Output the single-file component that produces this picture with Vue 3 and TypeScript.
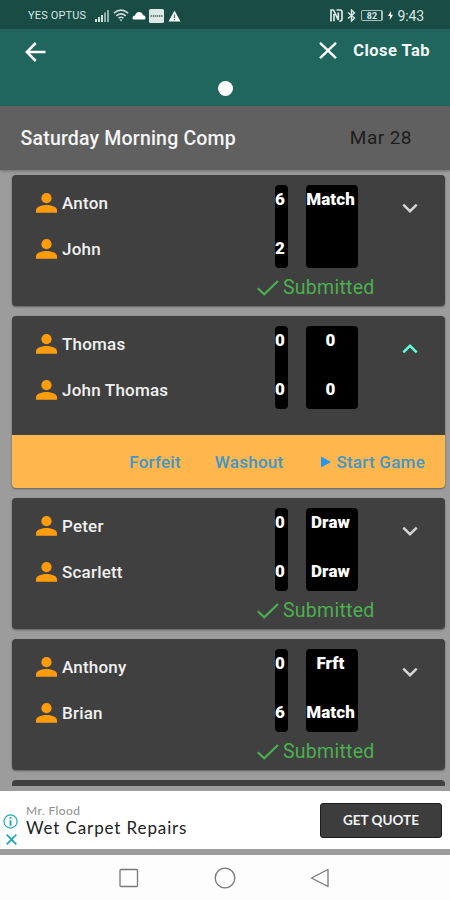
<script setup lang="ts">
interface Match {
  id: number
  players: string[]
  games: string[]
  results: string[]
  submitted: boolean
  open: boolean
}

const matches: Match[] = [
  { id: 1, players: ['Anton', 'John'], games: ['6', '2'], results: ['Match', ''], submitted: true, open: false },
  { id: 2, players: ['Thomas', 'John Thomas'], games: ['0', '0'], results: ['0', '0'], submitted: false, open: true },
  { id: 3, players: ['Peter', 'Scarlett'], games: ['0', '0'], results: ['Draw', 'Draw'], submitted: true, open: false },
  { id: 4, players: ['Anthony', 'Brian'], games: ['0', '6'], results: ['Frft', 'Match'], submitted: true, open: false },
]
</script>

<template>
  <div class="screen">
    <div class="status">
      <span class="carrier">YES OPTUS</span>
      <svg class="signal" width="14" height="12" viewBox="0 0 14 12">
        <path d="M0 9h2v3H0zM3 7h2v5H3zM6 5h2v7H6z" fill="#d5e4e1" />
        <path d="M9 2.500h2v9.500H9zM12 0h2v12h-2z" fill="#8fb0aa" />
      </svg>
      <svg class="wifi" width="16" height="13" viewBox="0 0 16 13" fill="none" stroke="#c9dbd8" stroke-width="1.600">
        <path d="M.8 4.200Q8-2 15.200 4.200M3.200 6.800Q8 2.800 12.800 6.800M5.500 9.200Q8 7.200 10.500 9.200" />
        <path d="M6.500 10.500h3L8 12.500z" fill="#c9dbd8" stroke="none" />
      </svg>
      <svg class="cloud" width="14" height="9" viewBox="0 0 14 9">
        <path d="M1.500 8.500Q.3 8.200.5 6.800 1.200 4.500 3 4.600 4 1 7 1t4 3.300q2.500.2 2.500 2.900-.1 1.300-1.500 1.300z" fill="#fff" />
      </svg>
      <svg class="news" width="15" height="14" viewBox="0 0 15 14">
        <rect width="15" height="14" rx="1.500" fill="#dce8e6" />
        <path d="M1.500 7h12" stroke="#6b8883" stroke-width="2.200" stroke-dasharray="1.500 .6" />
      </svg>
      <svg class="warn" width="13" height="12" viewBox="0 0 13 12">
        <path d="M6.500.5 12.500 11.500H.5z" fill="#f4faf9" />
        <path d="M6.500 4.500v3.500M6.500 9v1.200" stroke="#4a716b" stroke-width="1.200" />
      </svg>
      <span class="spacer"></span>
      <svg class="nfc" width="13" height="13" viewBox="0 0 13 13" fill="none" stroke="#dce8e6" stroke-width="1.700">
        <path d="M1 12.500V1H3.500L8.300 11V3.500M4 12.200V5M6.500 1h3.800Q12 1 12 3v7q0 2.200-2.500 2.200" />
      </svg>
      <svg class="bt" width="9" height="13" viewBox="0 0 9 13" fill="none" stroke="#dce8e6" stroke-width="1.400">
        <path d="M1 3.500 7.500 9 4.500 12V1L7.500 4 1 9.500" />
      </svg>
      <span class="battery"><span>82</span></span>
      <svg class="bolt" width="5" height="9" viewBox="0 0 5 9"><path d="M3 0 0 5h2L1.800 9 5 3.800H3z" fill="#fff" /></svg>
      <span class="clock">9:43</span>
    </div>

    <header class="appbar">
      <div class="toolbar">
        <svg width="21" height="20" viewBox="0 0 21 20" fill="none" stroke="#fff" stroke-width="2.500">
          <path d="M20.500 10H2M10.800 1 1.800 10l9 9" />
        </svg>
        <button class="close">
          <svg width="18" height="17" viewBox="0 0 18 17" fill="none" stroke="#fff" stroke-width="2.300">
            <path d="M1 .8 17 16.200M17 .8 1 16.200" />
          </svg>
          <span>Close Tab</span>
        </button>
      </div>
      <span class="dot"></span>
    </header>

    <section class="heading">
      <h1>Saturday Morning Comp</h1>
      <span class="date">Mar 28</span>
    </section>

    <main class="list">
      <article v-for="m in matches" :key="m.id" class="card">
        <div class="body" :class="{ short: !m.submitted }">
          <div class="players">
            <div v-for="p in m.players" :key="p" class="player">
              <svg width="21" height="20" viewBox="0 0 21 20" fill="#ff9c0b">
                <circle cx="10.500" cy="5.200" r="5.100" />
                <path d="M0 19.700v-2.500C0 13.500 6.500 12 10.500 12S21 13.500 21 17.200v2.500z" />
              </svg>
              <span>{{ p }}</span>
            </div>
          </div>
          <div class="scores">
            <div class="panel games">
              <span v-for="(g, i) in m.games" :key="i">{{ g }}</span>
            </div>
            <div class="panel results">
              <span v-for="(r, i) in m.results" :key="i">{{ r }}</span>
            </div>
            <div v-if="m.submitted" class="submitted">
              <svg width="22" height="16" viewBox="0 0 22 16" fill="none" stroke="#4caf50" stroke-width="2.100">
                <path d="M.8 8.300 7.200 14.300 21 1" />
              </svg>
              <span>Submitted</span>
            </div>
          </div>
          <svg class="chevron" :class="{ up: m.open }" width="16" height="10" viewBox="0 0 16 10" fill="none" stroke-width="2.400">
            <path d="M1.300 1.600 8 8.200l6.700-6.600" />
          </svg>
        </div>
        <div v-if="m.open" class="actions">
          <button class="forfeit">Forfeit</button>
          <button class="washout">Washout</button>
          <button class="start">
            <svg width="10" height="12" viewBox="0 0 10 12"><path d="M0 0.500 10 6 0 11.500z" fill="#2196f3" /></svg>
            <span>Start Game</span>
          </button>
        </div>
      </article>
      <div class="card next"></div>
    </main>

    <aside class="ad">
      <div class="marks">
        <svg width="15" height="15" viewBox="0 0 15 15" fill="none" stroke="#21a9ba">
          <circle cx="7.500" cy="7.500" r="6.600" stroke-width="1.200" />
          <path d="M7.500 3v1.700M7.500 6.300v5.500" stroke-width="1.900" />
        </svg>
        <svg width="11" height="11" viewBox="0 0 11 11" fill="none" stroke="#21a9ba" stroke-width="1.800">
          <path d="M.7.700l9.600 9.600M10.300.7.700 10.300" />
        </svg>
      </div>
      <div class="copy">
        <span class="brand">Mr. Flood</span>
        <span class="title">Wet Carpet Repairs</span>
      </div>
      <button class="quote">GET QUOTE</button>
    </aside>

    <nav class="nav">
      <svg width="20" height="20" viewBox="0 0 20 20"><rect x="1" y="1.500" width="17.500" height="17" rx="1" /></svg>
      <svg width="22" height="22" viewBox="0 0 22 22"><circle cx="11" cy="11" r="9.800" /></svg>
      <svg width="20" height="20" viewBox="0 0 20 20"><path d="M18 1.500v17L1.500 10z" stroke-linejoin="round" /></svg>
    </nav>
  </div>
</template>

<style>
body {
  margin: 0;
}
</style>

<style scoped>
.screen {
  width: 450px;
  height: 900px;
  overflow: hidden;
  display: flex;
  flex-direction: column;
  background: #9c9c9c;
  font-family: Roboto, sans-serif;
}
button {
  border: 0;
  padding: 0;
  background: none;
  font: inherit;
  letter-spacing: inherit;
  color: inherit;
}
svg {
  display: block;
  flex: none;
}
.status {
  box-sizing: border-box;
  height: 29px;
  flex: none;
  padding: 2px 26px 0 28px;
  display: flex;
  align-items: center;
  background: #184c44;
  color: #d9e6e4;
  font-size: 11px;
}
.carrier {
  width: 59px;
  white-space: nowrap;
  letter-spacing: 0.150px;
}
.signal { margin-left: 8px; }
.wifi { margin-left: 4px; }
.cloud { margin-left: 3px; }
.news { margin-left: 3px; }
.warn { margin-left: 4px; }
.spacer { flex: 1; }
.bt { margin-left: 4px; }
.battery {
  box-sizing: border-box;
  width: 22px;
  height: 11px;
  margin-left: 5px;
  display: flex;
  align-items: center;
  justify-content: center;
  border: 1px solid #a7c0bc;
  border-right-width: 2px;
  border-radius: 2px;
  font-size: 9px;
  font-weight: 700;
}
.bolt { margin: 0 4px 0 5px; }
.clock {
  font-size: 14px;
  letter-spacing: -0.100px;
}
.appbar {
  height: 77px;
  flex: none;
  display: flex;
  flex-direction: column;
  align-items: center;
  background: #21665c;
}
.toolbar {
  box-sizing: border-box;
  width: 100%;
  height: 46px;
  padding: 0 20px 0 25px;
  display: flex;
  align-items: center;
  justify-content: space-between;
}
.close {
  display: flex;
  align-items: center;
  gap: 16px;
  margin-top: -4px;
  color: #f2f8f7;
  font-size: 16.500px;
  font-weight: 700;
  letter-spacing: 0.450px;
}
.dot {
  width: 15px;
  height: 15px;
  margin-top: 6px;
  border-radius: 50%;
  background: #fff;
}
.heading {
  box-sizing: border-box;
  height: 64px;
  flex: none;
  padding: 0 38px 0 20.500px;
  display: flex;
  align-items: center;
  justify-content: space-between;
  background: #606060;
  box-shadow: 0 1px 3px rgba(0, 0, 0, 0.300);
}
h1 {
  margin: 0;
  color: #f5f5f5;
  font-size: 19.500px;
  font-weight: 500;
  letter-spacing: 0.190px;
}
.date {
  margin-top: -1px;
  color: #1d1d1d;
  font-size: 19px;
  letter-spacing: 0.450px;
}
.list {
  box-sizing: border-box;
  height: 621px;
  flex: none;
  padding: 5px 5px 0 12px;
  display: flex;
  flex-direction: column;
  gap: 10px;
}
.card {
  flex: none;
  overflow: hidden;
  border-radius: 4px;
  background: #404040;
  box-shadow: 0 1px 2px rgba(0, 0, 0, 0.400);
}
.next {
  height: 5.500px;
  border-radius: 4px 4px 0 0;
  box-shadow: none;
}
.body {
  box-sizing: border-box;
  height: 131px;
  padding: 10px 27px 0 24px;
  display: flex;
  align-items: flex-start;
}
.body.short {
  height: 119px;
}
.players {
  flex: 1;
  margin-top: -5px;
}
.player {
  height: 46px;
  display: flex;
  align-items: center;
  gap: 5px;
  color: #f0f0f0;
  font-size: 17px;
  font-weight: 500;
  letter-spacing: 0.200px;
}
.scores {
  width: 101px;
  margin-right: 44.500px;
  display: grid;
  grid-template-columns: 13px 52px;
  grid-template-rows: 83px auto;
  column-gap: 18px;
  justify-content: end;
}
.panel {
  box-sizing: border-box;
  display: flex;
  flex-direction: column;
  align-items: center;
  padding-right: 2px;
  border-radius: 4px;
  background: #000;
  color: #fff;
  font-size: 17px;
  font-weight: 900;
  line-height: 28px;
}
.panel span {
  flex: none;
  height: 48.500px;
}
.results span {
  letter-spacing: 0.100px;
}
.submitted {
  grid-column: 1 / 3;
  justify-self: end;
  margin: 8px -17px 0 0;
  display: flex;
  align-items: center;
  gap: 4px;
  color: #4caf50;
  font-size: 19.500px;
  line-height: 24px;
  letter-spacing: 0.250px;
}
.submitted svg {
  margin-top: -1px;
}
.chevron {
  margin-top: 18px;
  stroke: #d6d6d6;
}
.chevron.up {
  transform: scaleY(-1);
  stroke: #64ffda;
}
.actions {
  box-sizing: border-box;
  height: 53px;
  padding-right: 20px;
  display: flex;
  align-items: center;
  justify-content: flex-end;
  background: #ffb64d;
  color: #4097c9;
  font-size: 17px;
  font-weight: 500;
  letter-spacing: 0.250px;
}
.forfeit { margin-right: 34px; }
.washout { margin-right: 38px; }
.start {
  display: flex;
  align-items: center;
  gap: 5px;
}
.ad {
  box-sizing: border-box;
  height: 58px;
  flex: none;
  padding: 0 8px 0 3px;
  display: flex;
  align-items: center;
  background: #fff;
}
.marks {
  width: 23px;
  padding-top: 19px;
  display: flex;
  flex-direction: column;
  gap: 5px;
}
.marks svg + svg {
  margin-left: 3px;
}
.copy {
  flex: 1;
  display: flex;
  flex-direction: column;
  font-family: Lato, sans-serif;
  white-space: nowrap;
}
.brand {
  color: #8c8c8c;
  font-size: 12px;
  line-height: 15px;
  letter-spacing: 0.400px;
}
.title {
  color: #222;
  font-size: 17px;
  line-height: 20px;
  letter-spacing: 0.880px;
}
.quote {
  box-sizing: border-box;
  width: 122px;
  height: 35px;
  border: 1px solid #1c1c1c;
  border-radius: 3px;
  background: #3d3d3d;
  color: #f2f2f2;
  font-family: Lato, sans-serif;
  font-size: 13.500px;
  font-weight: 700;
}
.nav {
  box-sizing: border-box;
  height: 45px;
  flex: none;
  margin-top: 6px;
  padding: 0 120px 0 119px;
  display: flex;
  align-items: center;
  justify-content: space-between;
  background: #fdfdfd;
}
.nav svg {
  fill: none;
  stroke: #777;
  stroke-width: 1.300;
}
</style>
